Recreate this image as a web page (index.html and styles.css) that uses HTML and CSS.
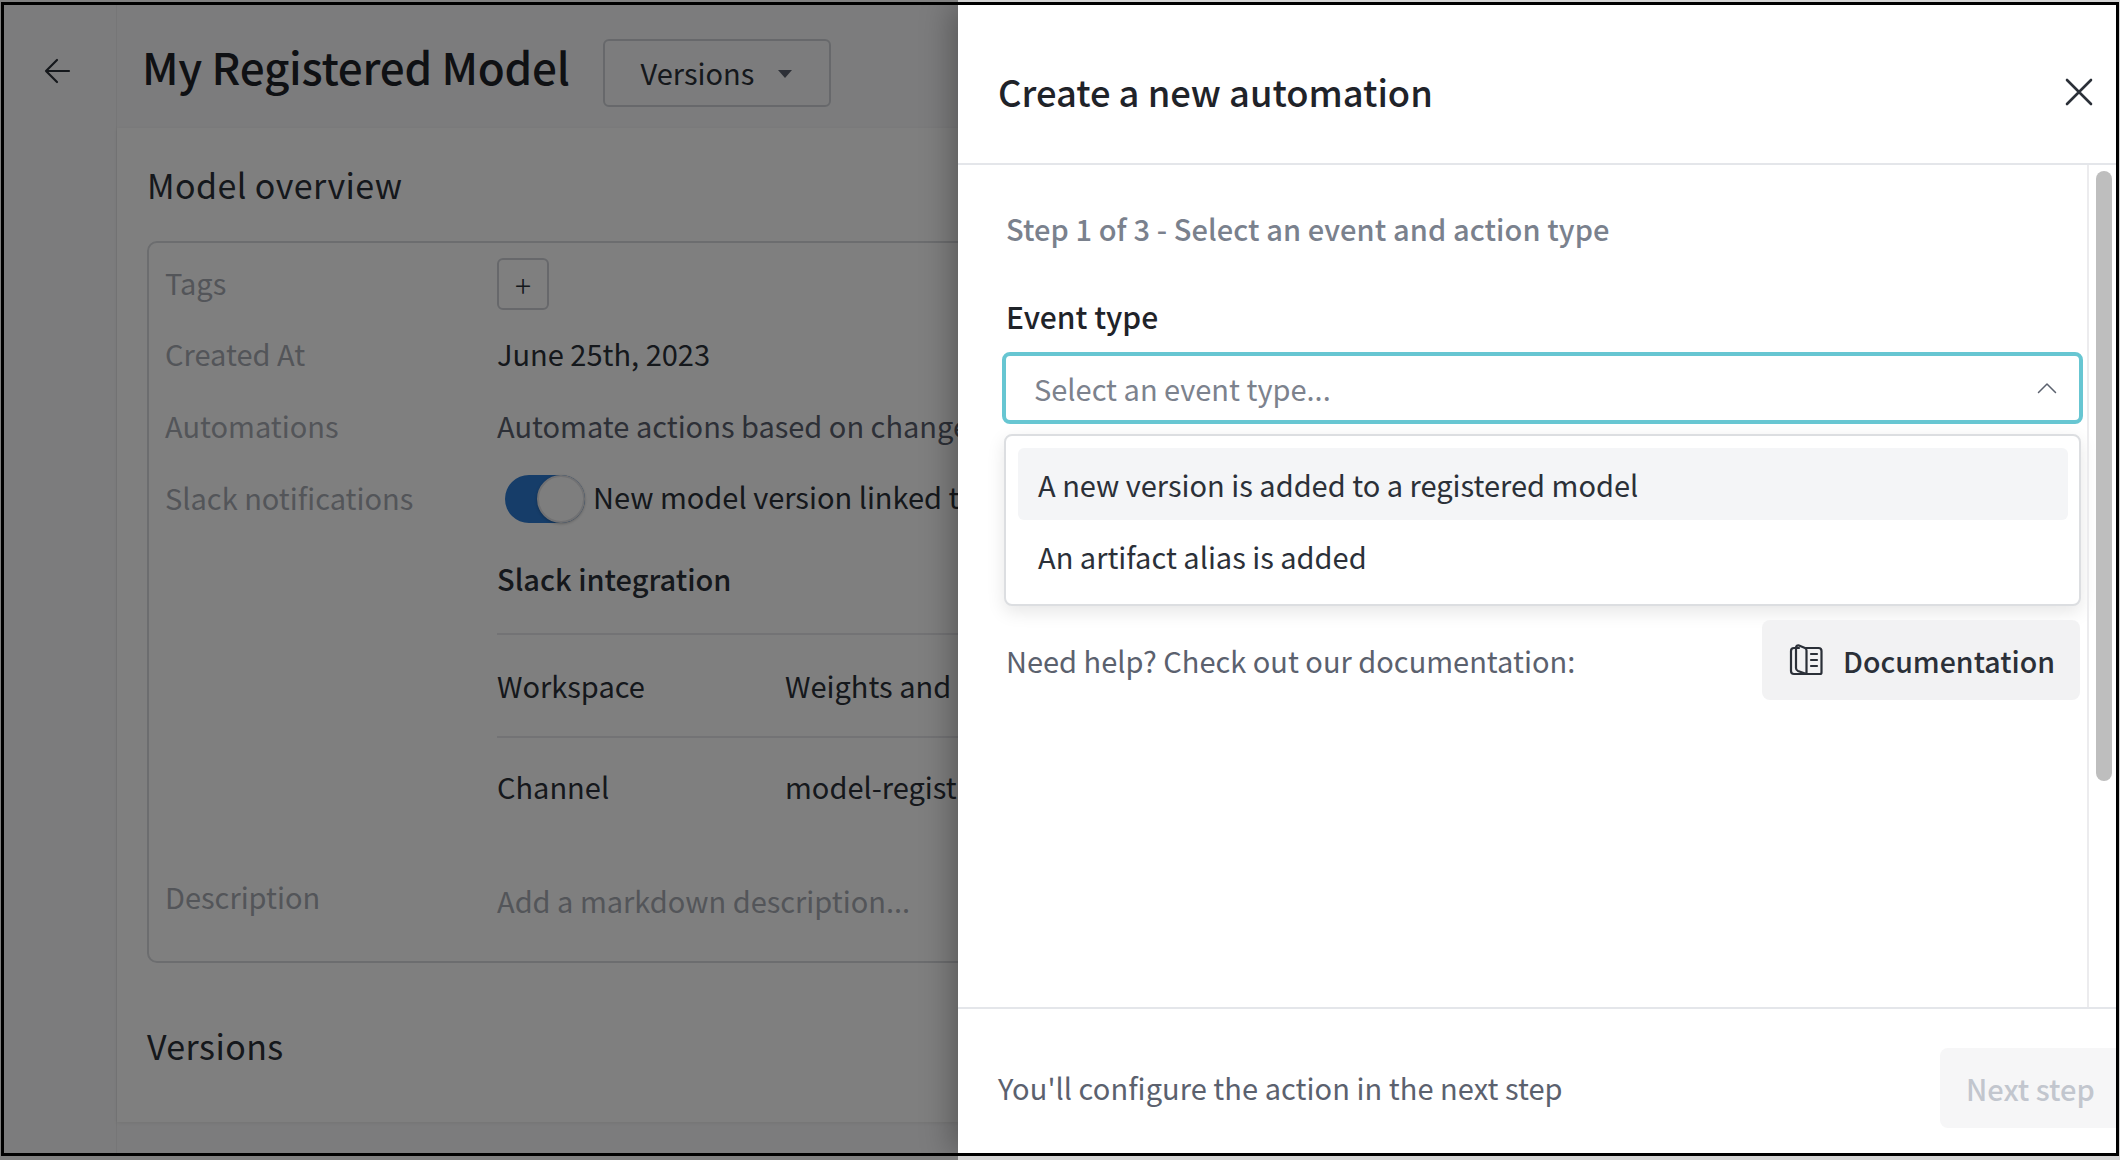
FILE: index.html
```html
<!DOCTYPE html>
<html lang="en">
<head>
<meta charset="utf-8">
<title>Create a new automation</title>
<link rel="stylesheet" href="styles.css">
</head>
<body>
<div class="frame">
  <div class="page">
    <div class="rail">
      <svg class="back" width="28" height="28" viewBox="0 0 28 28" fill="none" stroke="#2b3038" stroke-width="2.2" stroke-linecap="round" stroke-linejoin="round"><path d="M26 14H3M14 3 3 14l11 11"/></svg>
    </div>
    <div class="content">
      <header class="head">
        <h1 class="title">My Registered Model</h1>
        <button class="versions">Versions <span class="caret"></span></button>
      </header>
      <main class="main">
        <h2 class="section">Model overview</h2>
        <div class="card">
          <div class="row row-tags"><span class="label">Tags</span><span class="plus">+</span></div>
          <div class="row"><span class="label">Created At</span><span class="value">June 25th, 2023</span></div>
          <div class="row"><span class="label">Automations</span><span class="value muted">Automate actions based on changes to this model</span></div>
          <div class="row row-slack"><span class="label">Slack notifications</span>
            <span class="toggle-line"><span class="toggle"><span class="knob"></span></span><span class="value toggle-text">New model version linked to this model</span></span>
          </div>
          <div class="slack">
            <div class="slack-title">Slack integration</div>
            <div class="kv"><span class="k">Workspace</span><span class="value">Weights and Biases</span></div>
            <div class="kv"><span class="k">Channel</span><span class="value">model-registry-alerts</span></div>
          </div>
          <div class="row row-desc"><span class="label">Description</span><span class="value faint">Add a markdown description...</span></div>
        </div>
        <h2 class="section section-versions">Versions</h2>
      </main>
    </div>
    <div class="overlay"></div>
  </div>
  <aside class="drawer">
    <header class="drawer-head">
      <div class="drawer-title">Create a new automation</div>
      <svg class="close" width="30" height="30" viewBox="0 0 30 30" fill="none" stroke="#2b3038" stroke-width="2.6" stroke-linecap="round"><path d="M3 3l24 24M27 3 3 27"/></svg>
    </header>
    <div class="drawer-body">
      <div class="form">
        <div class="step">Step 1 of 3 - Select an event and action type</div>
        <div class="field-label">Event type</div>
        <div class="select">
          <span class="placeholder">Select an event type...</span>
          <svg width="20" height="12" viewBox="0 0 20 12" fill="none" stroke="#5b616e" stroke-width="1.5" stroke-linecap="round" stroke-linejoin="round"><path d="M1.500 10.500 10 2l8.500 8.500"/></svg>
        </div>
        <div class="menu">
          <div class="option active">A new version is added to a registered model</div>
          <div class="option">An artifact alias is added</div>
        </div>
        <div class="help">
          <span class="help-text">Need help? Check out our documentation:</span>
          <button class="doc">
            <svg width="34" height="32" viewBox="0 0 34 32" fill="none" stroke="#2b3038" stroke-width="2.2" stroke-linecap="round" stroke-linejoin="round"><path d="M10 4H5a3 3 0 0 0-3 3v20a3 3 0 0 0 3 3h26a1.500 1.500 0 0 0 1.500-1.500V7a3 3 0 0 0-3-3H17"/><path d="M7 3.500c0-1.500 1.500-2.500 3-2l6 2.500c1 .5 1.500 1.200 1.500 2.500V30L9 27c-1.300-.5-2-1.500-2-3z"/><path d="M22 10h6M22 16h6M22 22h6"/></svg>
            Documentation
          </button>
        </div>
      </div>
      <div class="scroll"><div class="thumb"></div></div>
    </div>
    <footer class="drawer-foot">
      <span class="foot-text">You'll configure the action in the next step</span>
      <button class="next">Next step</button>
    </footer>
  </aside>
</div>
</body>
</html>
```
FILE: styles.css
```css
* { box-sizing: border-box; }
html, body { margin: 0; padding: 0; }
body {
  width: 2120px; height: 1160px; overflow: hidden;
  background: linear-gradient(to right, #808080 958px, #d4d4d4 958px);
  font-family: "Noto Sans CJK SC", "Noto Sans", sans-serif;
  color: #2b3038;
}
button { font-family: inherit; }
.frame {
  width: 2118px; height: 1154px; margin: 2px 0 0 1px;
  border: 3px solid #000; overflow: hidden; display: flex;
}
.page { position: relative; flex: 1; display: flex; background: #f9f9fa; min-width: 0; overflow: hidden; }
.rail { width: 113px; flex: none; border-right: 1px solid #ececee; padding: 52px 0 0 39px; }
.back { display: block; }
.content { flex: 1; display: flex; flex-direction: column; min-width: 0; }
.head { height: 123px; flex: none; display: flex; align-items: flex-start; padding: 34px 0 0 25px; }
.title { margin: -3px 0 0; font-size: 44px; line-height: 60px; font-weight: 500; color: #1f2329; letter-spacing: -.25px; white-space: nowrap; }
.versions {
  margin-left: 33px; width: 228px; height: 68px; background: transparent;
  border: 2px solid #ced1d6; border-radius: 6px; font-size: 29px; color: #2b3038;
  text-align: left; padding: 0 0 2px 36px; display: flex; align-items: center;
}
.caret { margin-left: 24px; margin-top: 4px; width: 0; height: 0; border: 7px solid transparent; border-top: 8px solid #5b616e; border-bottom: 0; }
.main { flex: 1; margin-bottom: 31px; background: #fff; box-shadow: 0 1px 4px rgba(0,0,0,.08); padding: 33px 0 0 30px; min-height: 0; }
.section { margin: 0; font-size: 34px; line-height: 48px; font-weight: 400; color: #2b3038; letter-spacing: .4px; }
.section-versions { margin-top: 59px; }
.card {
  margin-top: 32px; width: 1000px; height: 722px; border: 2px solid #d8dade; border-radius: 10px;
  padding: 11px 0 0 16px;
}
.row { display: flex; align-items: center; height: 72px; white-space: nowrap; }
.row-tags { height: 60px; margin-bottom: 3px; }
.row-tags .label { margin-bottom: 4px; }
.label { width: 332px; flex: none; font-size: 29px; color: #a7abb3; }
.value { font-size: 29px; color: #2b3038; white-space: nowrap; }
.muted { color: #5b616e; }
.faint { color: #a7abb3; margin-top: 10px; }
.plus {
  width: 52px; height: 52px; border: 2px solid #ced1d6; border-radius: 6px;
  display: flex; align-items: center; justify-content: center; font-size: 30px; font-weight: 300;
}
.toggle-line { display: flex; align-items: center; gap: 8px; margin-left: 8px; }
.toggle { width: 80px; height: 48px; margin-top: 4px; border-radius: 24px; background: #2c7ad2; position: relative; display: block; }
.knob { position: absolute; right: 0; top: 0; width: 48px; height: 48px; border-radius: 50%; background: #fdfdfd; border: 2px solid #e2e3e6; box-shadow: 0 1px 3px rgba(0,0,0,.25); }
.toggle-text { padding-bottom: 2px; }
.slack { margin-left: 332px; padding-top: 25px; }
.slack-title { font-size: 29px; font-weight: 500; line-height: 40px; margin-bottom: 35px; }
.kv { display: flex; align-items: center; height: 103px; padding-bottom: 2px; border-top: 2px solid #e6e7ea; }
.kv .k { width: 288px; flex: none; font-size: 29px; }
.kv + .kv { height: 102px; padding-bottom: 4px; }
.row-desc { margin-top: 27px; height: 60px; }
.row-desc .label { margin-top: 2px; }
.overlay { position: absolute; inset: 0; background: rgba(0,0,0,.5); }
.drawer {
  position: relative; z-index: 1; flex: none; width: 1158px; background: #fff;
  display: flex; flex-direction: column; box-shadow: -6px 0 30px rgba(0,0,0,.3);
}
.drawer-head {
  height: 160px; flex: none; border-bottom: 2px solid #e4e6ea; display: flex; align-items: center;
  justify-content: space-between; padding: 13px 22px 0 40px;
}
.close { margin-top: 3px; }
.drawer-title { font-size: 36.300px; font-weight: 500; color: #1f2329; }
.drawer-body { flex: 1; display: flex; min-height: 0; }
.form { flex: 1; padding: 41px 0 0 48px; min-width: 0; }
.step { font-size: 29px; font-weight: 500; color: #7a818d; line-height: 44px; letter-spacing: .1px; }
.field-label { font-size: 30px; font-weight: 500; color: #1f2329; margin-top: 44px; line-height: 44px; }
.select {
  margin: 14px 0 0 -4px; width: 1081px; height: 72px; border: 4px solid #67c6d2; border-radius: 8px;
  display: flex; align-items: center; justify-content: space-between; padding: 0 22px 0 28px;
}
.placeholder { font-size: 29px; color: #7c828d; }
.menu {
  margin: 10px 0 0 -2px; width: 1077px; height: 172px; border: 2px solid #dcdee1; border-radius: 8px;
  padding: 12px 11px 12px 12px; background: #fff; box-shadow: 0 6px 18px rgba(0,0,0,.1);
}
.option { height: 72px; display: flex; align-items: center; padding-left: 20px; font-size: 29px; color: #2b3038; border-radius: 6px; }
.active { background: #f4f5f7; }
.help { margin-top: 14px; width: 1074px; display: flex; align-items: center; justify-content: space-between; }
.help-text { font-size: 29px; color: #5b616e; }
.doc {
  width: 318px; height: 80px; border: 0; border-radius: 8px; background: #f2f2f3; font-size: 28.500px; font-weight: 500;
  color: #2b3038; display: flex; align-items: center; gap: 20px; padding: 0 0 0 27px;
}
.scroll { width: 29px; flex: none; border-left: 2px solid #ececee; padding: 6px 0 0 7px; }
.thumb { width: 16px; height: 610px; border-radius: 8px; background: #bebebe; }
.drawer-foot {
  height: 146px; flex: none; border-top: 2px solid #e4e6ea; display: flex; align-items: flex-start;
  justify-content: space-between; padding: 39px 0 0 40px;
}
.foot-text { font-size: 29px; color: #5b616e; letter-spacing: .05px; line-height: 78px; }
.next {
  width: 180px; height: 80px; margin-right: -4px; border: 0; border-radius: 8px 0 0 8px; background: #f6f6f7;
  font-size: 29px; font-weight: 500; color: #c2c6ce; text-align: left; padding: 0 0 0 26px;
}
```
